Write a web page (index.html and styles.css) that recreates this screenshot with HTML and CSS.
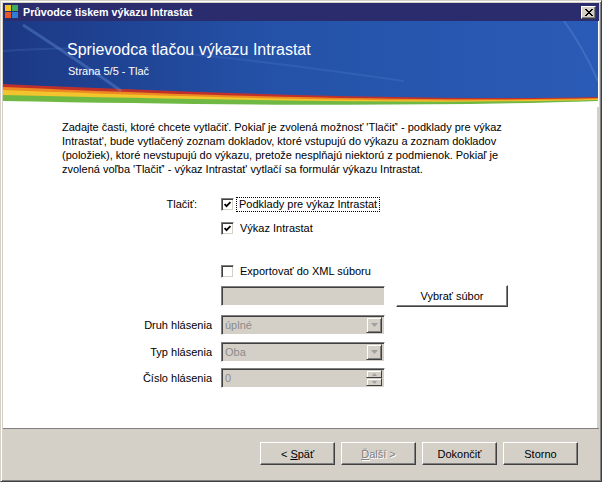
FILE: index.html
```html
<!DOCTYPE html>
<html lang="sk">
<head>
    <meta charset="UTF-8">
    <title>Průvodce tiskem výkazu Intrastat</title>
    <link rel="stylesheet" href="styles.css">
</head>
<body>

<div class="window">
    <div class="titlebar">
        <svg class="app-icon" width="14" height="14" viewBox="0 0 14 14">
            <rect x="0" y="0" width="6" height="6" fill="#f6c21c"/>
            <rect x="7" y="0" width="6" height="6" fill="#3fae5a"/>
            <rect x="0" y="7" width="6" height="6" fill="#e8552a"/>
            <rect x="7" y="7" width="6" height="6" fill="#2f7fd6"/>
        </svg>
        <span class="title">Průvodce tiskem výkazu Intrastat</span>
        <button class="close-btn">
            <svg width="8" height="7" viewBox="0 0 8 7">
                <path d="M0 0 L7 7 M1 0 L8 7 M7 0 L0 7 M8 0 L1 7" stroke="#000" stroke-width="1"/>
            </svg>
        </button>
    </div>

    <div class="banner">
        <svg class="banner-bg" width="595" height="86" viewBox="0 0 594 86" preserveAspectRatio="none">
            <defs>
                <linearGradient id="blue" x1="0" y1="0" x2="1" y2="0">
                    <stop offset="0" stop-color="#1c3884"/>
                    <stop offset="0.45" stop-color="#2452a8"/>
                    <stop offset="1" stop-color="#2a5bb6"/>
                </linearGradient>
                <linearGradient id="fade" x1="0" y1="0" x2="0" y2="1">
                    <stop offset="0" stop-color="#e9f3e4"/>
                    <stop offset="1" stop-color="#ffffff"/>
                </linearGradient>
            </defs>
            <rect width="594" height="86" fill="#fff"/>
            <path d="M0 0 H594 V82 C420 89 220 86 0 83 Z" fill="url(#fade)"/>
            <path d="M0 0 H594 V80 C420 86 220 84 0 80 Z" fill="#6fb843"/>
            <path d="M0 0 H594 V79 C420 83 220 79 0 74 Z" fill="#f2c42e"/>
            <path d="M0 0 H594 V78 C420 82 200 77 0 69 Z" fill="#ee8a22"/>
            <path d="M0 0 H594 V77 C420 81 200 75 0 66 Z" fill="#c0302a"/>
            <path d="M0 0 H594 V76 C420 80 200 72 0 63 Z" fill="url(#blue)"/>
            <path d="M20 4 C60 30 90 50 118 70" stroke="#6f9ae0" stroke-opacity="0.35" stroke-width="3" fill="none"/>
            <path d="M0 30 C120 20 260 40 400 60" stroke="#7aa4e8" stroke-opacity="0.15" stroke-width="2" fill="none"/>
            <path d="M560 0 C575 20 585 40 594 60" stroke="#7aa4e8" stroke-opacity="0.25" stroke-width="2" fill="none"/>
        </svg>
        <h1>Sprievodca tlačou výkazu Intrastat</h1>
        <div class="step">Strana 5/5 - Tlač</div>
    </div>

    <div class="page">
        <p class="intro">
            Zadajte časti, ktoré chcete vytlačiť. Pokiaľ je zvolená možnosť 'Tlačiť' - podklady pre výkaz<br>
            Intrastat', bude vytlačený zoznam dokladov, ktoré vstupujú do výkazu a zoznam dokladov<br>
            (položiek), ktoré nevstupujú do výkazu, pretože nesplňajú niektorú z podmienok. Pokiaľ je<br>
            zvolená voľba 'Tlačiť' - výkaz Intrastat' vytlačí sa formulár výkazu Intrastat.
        </p>

        <div class="form">
            <div class="row row-first">
                <span class="label label-print">Tlačiť:</span>
                <div class="check">
                    <span class="box"><svg width="7" height="7" viewBox="0 0 7 7"><polyline points="0.5,3 2.5,5.2 6.5,1" fill="none" stroke="#000" stroke-width="1.8"/></svg></span>
                    <span class="focus">Podklady pre výkaz Intrastat</span>
                </div>
            </div>
            <div class="row row-second">
                <span></span>
                <div class="check">
                    <span class="box"><svg width="7" height="7" viewBox="0 0 7 7"><polyline points="0.5,3 2.5,5.2 6.5,1" fill="none" stroke="#000" stroke-width="1.8"/></svg></span>
                    <span class="check-text">Výkaz Intrastat</span>
                </div>
            </div>
            <div class="row row-export">
                <span></span>
                <div class="check">
                    <span class="box"></span>
                    <span class="check-text">Exportovať do XML súboru</span>
                </div>
            </div>
            <div class="row row-file">
                <span></span>
                <div class="field"></div>
                <button class="browse-btn">Vybrať súbor</button>
            </div>
            <div class="row row-combo">
                <span class="label">Druh hlásenia</span>
                <div class="field combo">
                    <span class="value">úplné</span>
                    <span class="drop"><svg width="7" height="4" viewBox="0 0 7 4"><path d="M0 0 H7 L3.5 4 Z" fill="#a0a0a0"/></svg></span>
                </div>
            </div>
            <div class="row row-combo2">
                <span class="label">Typ hlásenia</span>
                <div class="field combo">
                    <span class="value">Oba</span>
                    <span class="drop"><svg width="7" height="4" viewBox="0 0 7 4"><path d="M0 0 H7 L3.5 4 Z" fill="#a0a0a0"/></svg></span>
                </div>
            </div>
            <div class="row row-combo3">
                <span class="label">Číslo hlásenia</span>
                <div class="field combo">
                    <span class="value">0</span>
                    <span class="spin">
                        <span class="spin-btn"><svg width="5" height="3" viewBox="0 0 5 3"><path d="M0 3 H5 L2.5 0 Z" fill="#a0a0a0"/></svg></span>
                        <span class="spin-btn"><svg width="5" height="3" viewBox="0 0 5 3"><path d="M0 0 H5 L2.5 3 Z" fill="#a0a0a0"/></svg></span>
                    </span>
                </div>
            </div>
        </div>
    </div>

    <div class="footer">
        <button class="btn">&lt; <u>S</u>päť</button>
        <button class="btn disabled"><u>Ď</u>alší &gt;</button>
        <button class="btn">Dokončiť</button>
        <button class="btn">Storno</button>
    </div>
</div>

</body>
</html>
```

FILE: styles.css
```css
/* Base */
html, body {
    margin: 0;
    padding: 0;
}
body {
    width: 602px;
    height: 482px;
    overflow: hidden;
    font-family: "Liberation Sans", Arial, sans-serif;
    font-size: 11px;
    color: #000;
    background: #d4d0c8;
}
button {
    font-family: inherit;
    font-size: inherit;
    color: #000;
    padding: 0;
    margin: 0;
}

/* Window frame */
.window {
    box-sizing: border-box;
    width: 602px;
    height: 482px;
    padding: 2px;
    background: #d4d0c8;
    border: 1px solid;
    border-color: #d4d0c8 #404040 #404040 #d4d0c8;
    box-shadow: inset 1px 1px #fff, inset -1px -1px #808080;
    display: flex;
    flex-direction: column;
}

/* Title bar */
.titlebar {
    height: 18px;
    flex: none;
    display: flex;
    align-items: center;
    padding: 0 3px 0 2px;
    background: #2a2c6e;
    color: #fff;
}
.app-icon {
    margin-right: 4px;
}
.title {
    flex: 1;
    font-weight: bold;
    font-size: 10.7px;
}
.close-btn {
    width: 15px;
    height: 13px;
    display: flex;
    align-items: center;
    justify-content: center;
    background: #d4d0c8;
    border: 1px solid;
    border-color: #fff #404040 #404040 #fff;
    box-shadow: inset -1px -1px #808080;
}

/* Banner */
.banner {
    position: relative;
    height: 86px;
    flex: none;
    box-sizing: border-box;
    padding: 19px 0 0 64px;
    color: #fff;
    background: #fff;
}
.banner-bg {
    position: absolute;
    left: 0;
    top: 0;
}
.banner h1 {
    position: relative;
    margin: 0;
    font-size: 16px;
    font-weight: normal;
    line-height: 20px;
}
.banner .step {
    position: relative;
    margin: 5px 0 0 1px;
    font-size: 11px;
    line-height: 13px;
}

/* Page */
.page {
    flex: 1;
    background: #fff;
    padding: 13px 0 0 59px;
    border-right: 2px solid #d4d0c8;
}
.intro {
    margin: 0;
    line-height: 14px;
}
.form {
    margin-top: 19px;
}
.row {
    display: grid;
    grid-template-columns: 150px 164px auto;
    column-gap: 9px;
    align-items: center;
}
.row-first { height: 18px; }
.row-second { height: 18px; margin-top: 6px; }
.row-export { height: 18px; margin-top: 25px; }
.row-file { height: 22px; margin-top: 5px; }
.row-combo { height: 20px; margin-top: 8px; }
.row-combo2 { height: 20px; margin-top: 7px; }
.row-combo3 { height: 20px; margin-top: 6px; }

.label {
    justify-self: end;
    white-space: nowrap;
}
.label-print {
    margin-right: 15px;
    align-self: start;
    padding-top: 3px;
}

/* Checkboxes */
.check {
    display: flex;
    align-items: center;
    white-space: nowrap;
}
.box {
    box-sizing: border-box;
    width: 13px;
    height: 13px;
    flex: none;
    display: flex;
    align-items: center;
    justify-content: center;
    background: #fff;
    border: 1px solid;
    border-color: #808080 #fff #fff #808080;
    box-shadow: inset 1px 1px #404040, inset -1px -1px #d4d0c8;
}
.check-text {
    margin-left: 6px;
}
.focus {
    margin-left: 3px;
    padding: 0 2px 1px 2px;
    outline: 1px dotted #000;
}

/* Sunken fields */
.field {
    box-sizing: border-box;
    height: 20px;
    background: #d4d0c8;
    border: 1px solid;
    border-color: #808080 #fff #fff #808080;
    box-shadow: inset 1px 1px #404040, inset -1px -1px #d4d0c8;
}
.combo {
    display: flex;
    align-items: center;
    justify-content: space-between;
    padding: 2px 2px 2px 3px;
}
.value {
    color: #8c8c8c;
}
.drop {
    box-sizing: border-box;
    width: 16px;
    height: 16px;
    display: flex;
    align-items: center;
    justify-content: center;
    background: #d4d0c8;
    border: 1px solid;
    border-color: #d4d0c8 #404040 #404040 #d4d0c8;
    box-shadow: inset 1px 1px #fff, inset -1px -1px #808080;
}
.spin {
    display: flex;
    flex-direction: column;
}
.spin-btn {
    box-sizing: border-box;
    width: 16px;
    height: 8px;
    display: flex;
    align-items: center;
    justify-content: center;
    background: #d4d0c8;
    border: 1px solid;
    border-color: #d4d0c8 #404040 #404040 #d4d0c8;
    box-shadow: inset 1px 1px #fff;
}

.browse-btn {
    width: 112px;
    height: 22px;
    margin-left: 2px;
    background: #fff;
    border: 1px solid;
    border-color: #fff #404040 #404040 #fff;
    box-shadow: inset -1px -1px #808080;
}

/* Footer */
.footer {
    height: 51px;
    flex: none;
    box-sizing: border-box;
    border-top: 1px solid #808080;
    display: flex;
    justify-content: flex-end;
    align-items: flex-start;
    gap: 6px;
    padding: 13px 21px 0 0;
}
.btn {
    width: 75px;
    height: 23px;
    background: #d4d0c8;
    border: 1px solid;
    border-color: #fff #404040 #404040 #fff;
    box-shadow: inset -1px -1px #808080, inset 1px 1px #d4d0c8;
}
.btn.disabled {
    color: #808080;
    text-shadow: 1px 1px #fff;
}
```
